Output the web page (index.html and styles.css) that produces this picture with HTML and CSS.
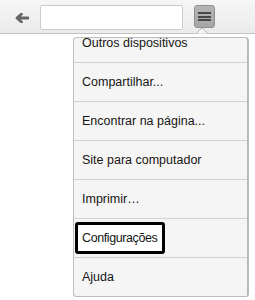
FILE: index.html
```html
<!DOCTYPE html>
<html lang="pt-br">

<head>
    <meta charset="UTF-8">
    <meta name="viewport" content="width=device-width, initial-scale=1.0">
    <title>Menu</title>
    <link rel="stylesheet" href="styles.css">
</head>

<body>
    <!-- Barra do navegador -->
    <div class="toolbar">
        <div class="back">
            <svg width="14" height="10" viewBox="0 0 14 10">
                <path d="M13.5 5 H2.5 M6.5 1 L2 5 L6.5 9" fill="none" stroke="#666" stroke-width="2.8" stroke-linejoin="round" stroke-linecap="round"/>
            </svg>
        </div>
        <div class="url"></div>
        <div class="menu-btn">
            <span></span>
            <span></span>
            <span></span>
        </div>
        <svg class="caret" width="12" height="7" viewBox="0 0 12 7">
            <path d="M0 6.5 L6 1 L12 6.5" fill="#f5f5f5" stroke="#b5b5b5" stroke-width="1"/>
        </svg>
    </div>

    <!-- Menu aberto -->
    <div class="menu">
        <div class="item first">Outros dispositivos</div>
        <div class="item">Compartilhar...</div>
        <div class="item">Encontrar na página...</div>
        <div class="item">Site para computador</div>
        <div class="item">Imprimir…</div>
        <div class="item"><span class="destaque">Configurações</span></div>
        <div class="item">Ajuda</div>
    </div>
</body>

</html>
```

FILE: styles.css
```css
body {
    margin: 0;
    padding: 0;
    background-color: white;
    font-family: "Liberation Sans", Arial, sans-serif;
    width: 255px;
    height: 300px;
    overflow: hidden;
}

.toolbar {
    position: relative;
    display: flex;
    align-items: flex-start;
    height: 28px;
    padding-top: 5px;
    background: linear-gradient(#f6f6f6, #ebebeb);
    border-bottom: 1px solid #c4c4c4;
}

.back {
    width: 40px;
    height: 25px;
    box-sizing: border-box;
    padding-left: 15px;
    display: flex;
    align-items: center;
}

.url {
    width: 143px;
    height: 25px;
    box-sizing: border-box;
    background-color: white;
    border: 1px solid #cbcbcb;
    border-radius: 2px;
}

.menu-btn {
    margin-left: 11px;
    width: 21px;
    height: 23px;
    box-sizing: border-box;
    background: linear-gradient(#b4b4b4, #a6a6a6);
    border: 1px solid #8f8f8f;
    border-radius: 3px;
    display: flex;
    flex-direction: column;
    justify-content: center;
    align-items: center;
    gap: 1.6px;
}

.menu-btn span {
    display: block;
    width: 13px;
    height: 2px;
    background-color: #474747;
}

.caret {
    position: absolute;
    left: 196px;
    top: 27px;
}

.menu {
    margin: 3px 0 0 73px;
    width: 176px;
    box-sizing: border-box;
    background-color: #f5f5f5;
    border: 1px solid #bdbdbd;
    border-right: 2px solid #b9b9b9;
    border-radius: 4px 4px 3px 3px;
    overflow: hidden;
}

.item {
    height: 38px;
    display: flex;
    align-items: center;
    padding-left: 8px;
    font-size: 12.5px;
    color: #151515;
    border-bottom: 1px solid #d2d2d2;
}

.item.first {
    margin-top: -14px;
}

.item:last-child {
    border-bottom: none;
}

.destaque {
    display: inline-block;
    margin-left: -7px;
    padding: 0 5px 0 4px;
    line-height: 26px;
    border: 3px solid #000;
    border-radius: 3px;
    background-color: white;
    letter-spacing: -0.4px;
}
```
